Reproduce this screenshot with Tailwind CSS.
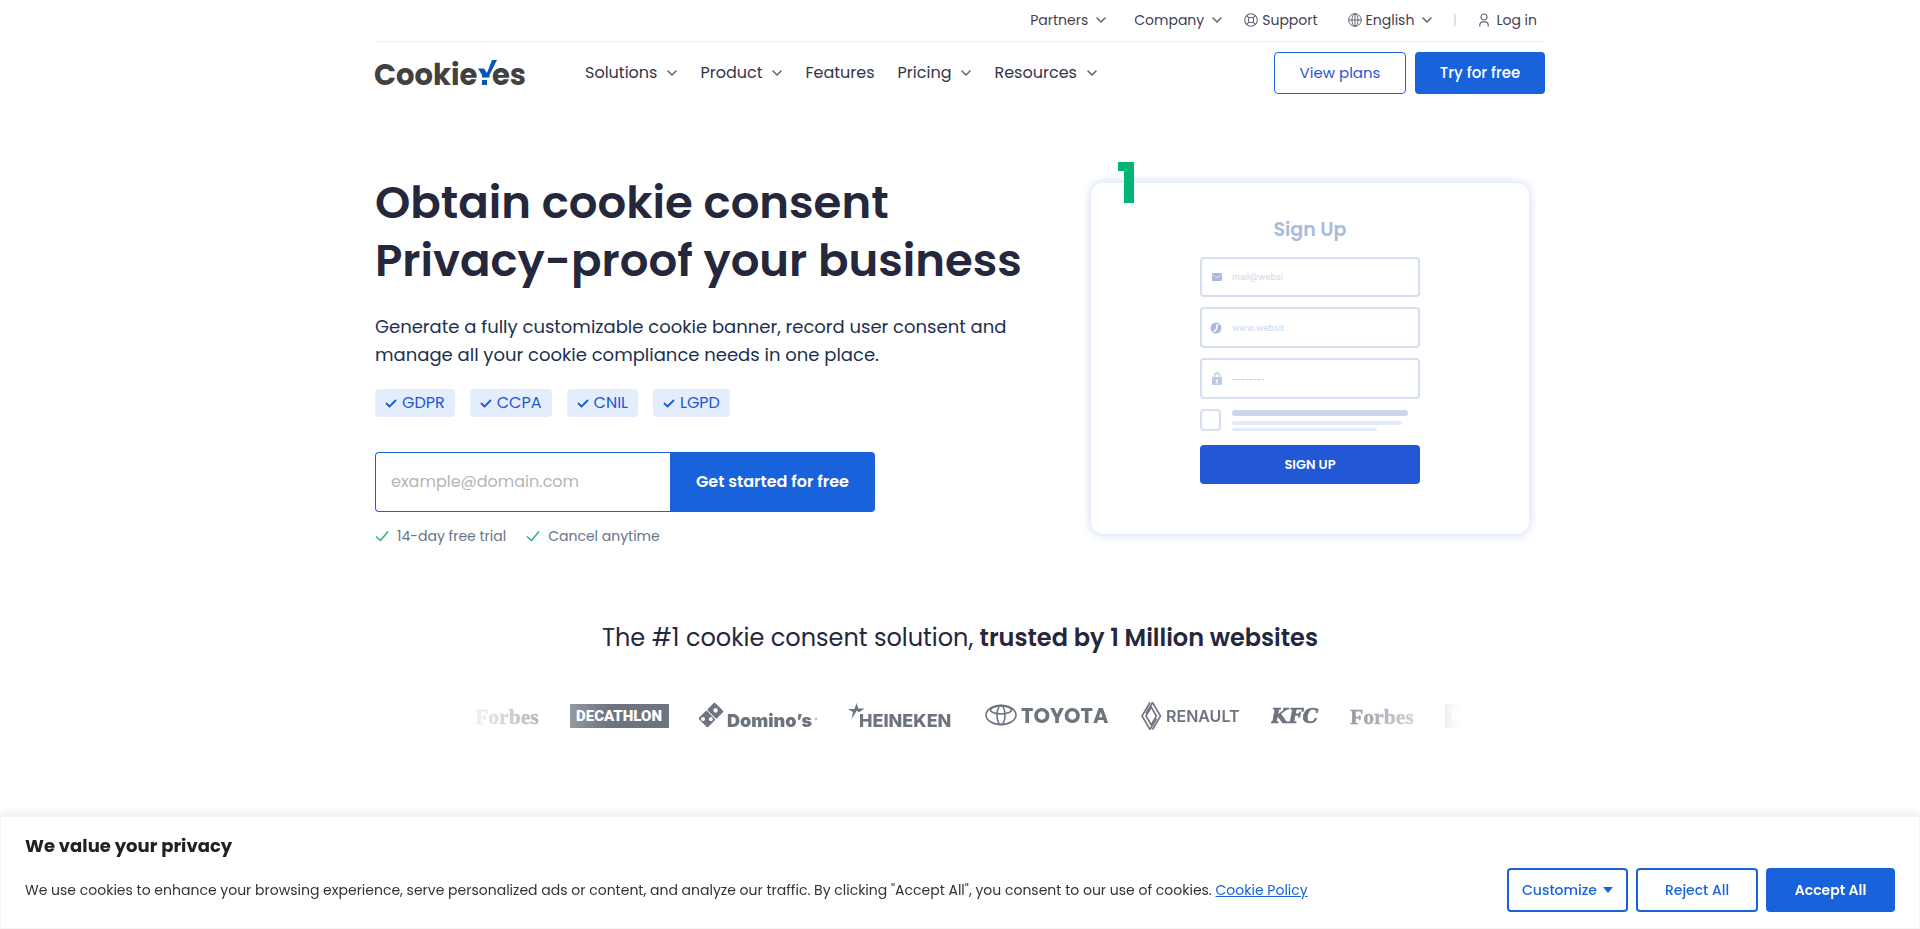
<!DOCTYPE html>
<html lang="en">
<head>
    <meta charset="UTF-8">
    <meta name="viewport" content="width=device-width, initial-scale=1.0">
    <title>CookieYes</title>
    <script src="https://cdn.jsdelivr.net/npm/@tailwindcss/browser@4"></script>
</head>
<body class="bg-white font-[Poppins,Inter,sans-serif] text-[#25273d] min-h-screen">
    <!-- Shared icons -->
    <svg class="hidden">
        <symbol id="chevron" viewBox="0 0 10 6"><path d="M1 1l4 4 4-4" fill="none" stroke="#62667a" stroke-width="1.6" stroke-linecap="round" stroke-linejoin="round"/></symbol>
        <symbol id="tick" viewBox="0 0 12 9"><path d="M1.5 4.5l3 3 6-6" fill="none" stroke="currentColor" stroke-width="1.8" stroke-linecap="round" stroke-linejoin="round"/></symbol>
        <symbol id="tick-thin" viewBox="0 0 14 12"><path d="M1 6.5l4.5 4L13 1.5" fill="none" stroke="currentColor" stroke-width="1.5"/></symbol>
        <symbol id="forbes" viewBox="0 0 66 28"><text x="0" y="22" font-family="Liberation Serif" font-weight="700" font-size="22" fill="#6d737f" stroke="#6d737f" stroke-width=".4">Forbes</text></symbol>
        <symbol id="decathlon" viewBox="0 0 99 28">
            <rect y="2" width="99" height="24" fill="#6d737f"/>
            <text x="49" y="19" text-anchor="middle" font-family="Roboto" font-weight="900" font-size="15" fill="#fff">DECATHLON</text>
        </symbol>
    </svg>

    <header class="max-w-[1170px] mx-auto">
        <!-- Top bar -->
        <nav class="flex justify-end items-center h-[42px] pr-2 pb-0.5 border-b border-[#e7eff8] text-sm text-[#3f4254]">
            <a href="#" class="flex items-center gap-2">Partners <svg class="w-2.5 h-1.5"><use href="#chevron"/></svg></a>
            <a href="#" class="flex items-center gap-2 ml-7">Company <svg class="w-2.5 h-1.5"><use href="#chevron"/></svg></a>
            <a href="#" class="flex items-center gap-1 ml-[22px]">
                <svg class="w-3.5 h-3.5" viewBox="0 0 14 14" fill="none" stroke="#62667a" stroke-width="1.1"><circle cx="7" cy="7" r="6.3"/><rect x="4.500" y="4.500" width="5" height="5" rx="1.500"/><path d="M2.700 2.700l2.200 2.200M11.300 2.700L9.100 4.900M2.700 11.300l2.200-2.200M11.300 11.300L9.100 9.100"/></svg>
                Support
            </a>
            <a href="#" class="flex items-center gap-1 ml-[30px]">
                <svg class="w-3.5 h-3.5" viewBox="0 0 14 14" fill="none" stroke="#62667a"><circle cx="7" cy="7" r="6.3"/><ellipse cx="7" cy="7" rx="3" ry="6.3"/><path d="M7 .7v12.6M.7 7h12.6"/></svg>
                English <svg class="w-2.5 h-1.5 ml-1"><use href="#chevron"/></svg>
            </a>
            <span class="w-0.5 h-3 bg-[#e3dfe8] mx-[22px]"></span>
            <a href="#" class="flex items-center gap-1.5">
                <svg class="w-3 h-3.5" viewBox="0 0 12 14" fill="none" stroke="#62667a" stroke-width="1.2"><circle cx="6" cy="4" r="3"/><path d="M1.8 13.5V12a3.2 3.2 0 013.2-3.2h2a3.2 3.2 0 013.2 3.2v1.5"/></svg>
                Log in
            </a>
        </nav>

        <!-- Main nav -->
        <div class="flex items-center pt-2.5">
            <a href="#" aria-label="CookieYes" class="shrink-0">
                <svg class="w-[150px] h-[30px] overflow-visible" viewBox="0 0 150 30" font-family="Poppins, Inter" font-weight="700" font-size="29" fill="#414141">
                    <text x="-1" y="27">Cookie</text>
                    <text x="151" y="27" text-anchor="end">es</text>
                    <path d="M103 10.500h6l3 4.500L117 2h5l-7.500 15v2.500H107V17z" fill="#0956b3"/>
                    <rect x="107" y="22" width="5" height="5" fill="#0956b3"/>
                </svg>
            </a>
            <nav class="flex items-center gap-[23px] ml-[60px] text-base text-[#333648]">
                <a href="#" class="flex items-center gap-2.5">Solutions <svg class="w-2.5 h-1.5"><use href="#chevron"/></svg></a>
                <a href="#" class="flex items-center gap-2.5">Product <svg class="w-2.5 h-1.5"><use href="#chevron"/></svg></a>
                <a href="#">Features</a>
                <a href="#" class="flex items-center gap-2.5">Pricing <svg class="w-2.5 h-1.5"><use href="#chevron"/></svg></a>
                <a href="#" class="flex items-center gap-2.5">Resources <svg class="w-2.5 h-1.5"><use href="#chevron"/></svg></a>
            </nav>
            <div class="flex gap-[9px] ml-auto text-[15px]">
                <a href="#" class="flex items-center justify-center w-[132px] h-[42px] rounded border border-[#1863dc] text-[#1f58d6]">View plans</a>
                <a href="#" class="flex items-center justify-center w-[130px] h-[42px] rounded bg-[#1863dc] text-white font-medium">Try for free</a>
            </div>
        </div>
    </header>

    <main class="max-w-[1170px] mx-auto">
        <!-- Hero -->
        <section class="flex justify-between pt-20">
            <div>
                <h1 class="text-[45px] leading-[58px] font-semibold">Obtain cookie consent<br>Privacy-proof your business</h1>
                <p class="mt-[23px] text-lg leading-7 text-[#1c304d]">Generate a fully customizable cookie banner, record user consent and<br>manage all your cookie compliance needs in one place.</p>
                <ul class="flex gap-[15px] mt-5 text-base text-[#1f58d6]">
                    <li class="flex items-center gap-[5px] h-7 px-2.5 rounded bg-[#e3edfc]"><svg class="w-3 h-[9px]"><use href="#tick"/></svg>GDPR</li>
                    <li class="flex items-center gap-[5px] h-7 px-2.5 rounded bg-[#e3edfc]"><svg class="w-3 h-[9px]"><use href="#tick"/></svg>CCPA</li>
                    <li class="flex items-center gap-[5px] h-7 px-2.5 rounded bg-[#e3edfc]"><svg class="w-3 h-[9px]"><use href="#tick"/></svg>CNIL</li>
                    <li class="flex items-center gap-[5px] h-7 px-2.5 rounded bg-[#e3edfc]"><svg class="w-3 h-[9px]"><use href="#tick"/></svg>LGPD</li>
                </ul>
                <form class="flex w-[500px] h-[60px] mt-[35px]">
                    <input type="email" aria-label="Email" placeholder="example@domain.com" class="flex-1 min-w-0 px-[15px] border border-r-0 border-[#1863dc] rounded-l-sm text-base placeholder:text-[#b5b5b5]">
                    <button type="button" class="w-[205px] rounded-r-sm bg-[#1863dc] text-white text-base font-semibold">Get started for free</button>
                </form>
                <ul class="flex gap-5 mt-3.5 text-sm text-[#66758a]">
                    <li class="flex items-center gap-2"><svg class="w-3.5 h-3 text-[#2fae7d]"><use href="#tick-thin"/></svg>14-day free trial</li>
                    <li class="flex items-center gap-2"><svg class="w-3.5 h-3 text-[#2fae7d]"><use href="#tick-thin"/></svg>Cancel anytime</li>
                </ul>
            </div>

            <!-- Sign up illustration -->
            <div class="relative w-[438px] h-[351px] mt-[9px] mr-4 rounded-xl bg-white shadow-[0_0_8px_2px_#d9e3f5]">
                <svg class="absolute left-[27px] -top-[21px] w-4 h-[41px]" viewBox="0 0 16 41"><path d="M0 0h16v41H6V9H0z" fill="#03b675"/></svg>
                <form class="flex flex-col w-[220px] mx-auto pt-[34px]">
                    <h2 class="text-[19px] leading-[26px] font-semibold text-center text-[#a9bbdd]">Sign Up</h2>
                    <label class="flex items-center gap-2.5 h-10 mt-3.5 px-2.5 border-2 border-[#d5dff0] rounded">
                        <svg class="w-2.5 h-2.5" viewBox="0 0 10 10"><rect y="1" width="10" height="8" rx="1.200" fill="#a9bbdd"/><path d="M.5 3L5 5.500 9.500 3" fill="none" stroke="#dfe8f6" stroke-width=".8"/></svg>
                        <input type="text" placeholder="mail@websi" class="min-w-0 flex-1 font-[Inter,sans-serif] text-[9px] placeholder:text-[#cbd8ec]">
                    </label>
                    <label class="flex items-center gap-2.5 h-[41px] mt-2.5 px-2.5 border-2 border-[#d5dff0] rounded">
                        <svg class="w-2.5 h-2.5 overflow-visible" viewBox="0 0 10 10"><circle cx="4" cy="5" r="5.500" fill="#a9bbdd"/><path d="M6.500 1.500Q4.500 2 4.800 4.200T3.100 7.800L1.500 8.500" fill="none" stroke="#fff" stroke-width="1.600"/></svg>
                        <input type="text" placeholder="www.websit" class="min-w-0 flex-1 font-[Inter,sans-serif] text-[9px] placeholder:text-[#cbd8ec]">
                    </label>
                    <label class="flex items-center gap-2.5 h-[41px] mt-2.5 px-2.5 border-2 border-[#d5dff0] rounded">
                        <svg class="w-2.5 h-[13px]" viewBox="0 0 10 13"><rect y="5" width="10" height="8" rx="1" fill="#bccce8"/><path d="M2.500 5V3.500a2.500 2.500 0 015 0V5" fill="none" stroke="#bccce8" stroke-width="1.400"/><circle cx="5" cy="8.500" r="1" fill="#fff"/><rect x="4.500" y="9" width="1" height="2.500" fill="#fff"/></svg>
                        <input type="text" placeholder="--------" class="min-w-0 flex-1 font-[Inter,sans-serif] text-[9px] placeholder:text-[#b9c9e4]">
                    </label>
                    <div class="flex gap-[11px] mt-2.5">
                        <input type="checkbox" aria-label="Accept terms" class="appearance-none w-[21px] h-[22px] border-2 border-[#d5dff0] rounded-sm">
                        <div class="pt-px">
                            <div class="w-44 h-1.5 rounded-full bg-[#cbd8ec]"></div>
                            <div class="w-[170px] h-1 mt-[5px] rounded-full bg-[#e3ecfa]"></div>
                            <div class="w-[145px] h-[3px] mt-[3px] rounded-full bg-[#e3ecfa]"></div>
                        </div>
                    </div>
                    <button type="button" class="h-[39px] mt-3.5 rounded bg-[#2258d5] text-white text-[13px] font-semibold">SIGN UP</button>
                </form>
            </div>
        </section>

        <!-- Customers -->
        <section class="mt-[74px]">
            <h2 class="text-2xl leading-9 text-center">The #1 cookie consent solution, <strong class="font-semibold">trusted by 1 Million websites</strong></h2>
            <div class="flex items-center gap-[30px] max-w-[1000px] mx-auto mt-[46px] pl-[15px] overflow-hidden [mask-image:linear-gradient(to_right,transparent,black_15%,black_85%,transparent)]">
                <svg class="shrink-0 w-[65px] h-7"><use href="#forbes"/></svg>
                <svg class="shrink-0 w-[99px] h-7"><use href="#decathlon"/></svg>
                <svg class="shrink-0 w-[119px] h-7 overflow-visible" viewBox="0 0 119 28" fill="#6d737f">
                    <g transform="rotate(45 12 13)">
                        <rect x="5.500" y="1.500" width="13" height="10.500" rx="1"/>
                        <rect x="5.500" y="13" width="13" height="11.500" rx="1"/>
                        <g fill="#fff"><circle cx="12" cy="6.500" r="2.200"/><circle cx="9.200" cy="21.500" r="2"/><circle cx="14.800" cy="16" r="2"/></g>
                    </g>
                    <text x="28" y="25" font-family="Inter" font-weight="900" font-size="18">Domino’s</text>
                    <circle cx="117" cy="17" r="1" fill="none" stroke="#6d737f" stroke-width=".5"/>
                </svg>
                <svg class="shrink-0 w-[107px] h-7 overflow-visible" viewBox="0 0 107 28" fill="#6d737f">
                    <path d="M8.500 1l1.800 5.500h6.200L11.500 10l-.5 0L8.500 8.800 7 11.500 3.500 17 5 10 0 7h6.500z"/>
                    <text x="11" y="25" font-family="Inter" font-weight="800" font-size="18">HEINEKEN</text>
                </svg>
                <svg class="shrink-0 w-[126px] h-7" viewBox="0 0 126 28" fill="none" stroke="#6d737f" stroke-width="1.600">
                    <ellipse cx="16" cy="13" rx="15" ry="9.600"/>
                    <ellipse cx="16" cy="8" rx="10.500" ry="4"/>
                    <ellipse cx="16" cy="13" rx="4" ry="9.600"/>
                    <text x="36" y="21" font-family="Poppins" font-weight="700" font-size="21" fill="#6d737f" stroke="none">TOYOTA</text>
                </svg>
                <svg class="shrink-0 w-[100px] h-7" viewBox="0 0 100 28" fill="none" stroke="#6d737f" stroke-width="1.600">
                    <path d="M9 .5L1 14l8 13.500L15.500 16.500M11.500 27.500L19.500 14 11.500.5 5 11.500"/>
                    <path d="M10.200 5L5 14l5.200 9 5.200-9z"/>
                    <text x="25" y="19.500" font-family="Inter" font-weight="600" font-size="16" fill="#6d737f" stroke="none">RENAULT</text>
                </svg>
                <svg class="shrink-0 w-[49px] h-7" viewBox="0 0 49 28"><text x="0" y="21" font-family="DejaVu Serif" font-weight="700" font-style="italic" font-size="20" fill="#6d737f" stroke="#6d737f" stroke-width=".6">KFC</text></svg>
                <svg class="shrink-0 w-[65px] h-7"><use href="#forbes"/></svg>
                <svg class="shrink-0 w-[99px] h-7"><use href="#decathlon"/></svg>
            </div>
        </section>
    </main>

    <!-- Cookie banner -->
    <div class="fixed bottom-0 inset-x-0 px-6 pt-4 pb-4 bg-white border border-[#f4f4f4] text-[#212121] shadow-[0_-1px_10px_#acabab4d]">
        <p class="text-lg leading-[26px] font-bold">We value your privacy</p>
        <div class="flex items-center justify-between mt-[9px]">
            <p class="text-sm text-[#333]">We use cookies to enhance your browsing experience, serve personalized ads or content, and analyze our traffic. By clicking "Accept All", you consent to our use of cookies. <a href="#" class="text-[#1863dc] underline">Cookie Policy</a></p>
            <div class="flex gap-2 text-sm text-[#1863dc]">
                <button type="button" class="flex items-center justify-center gap-1.5 w-[121px] h-11 border-2 border-[#1863dc] rounded-sm font-medium">Customize <svg class="w-2.5 h-1.5" viewBox="0 0 10 6"><path d="M0 0h10L5 6z" fill="#1863dc"/></svg></button>
                <button type="button" class="w-[122px] h-11 border-2 border-[#1863dc] rounded-sm font-medium">Reject All</button>
                <button type="button" class="w-[129px] h-11 rounded-sm bg-[#1863dc] text-white font-semibold">Accept All</button>
            </div>
        </div>
    </div>
</body>
</html>
